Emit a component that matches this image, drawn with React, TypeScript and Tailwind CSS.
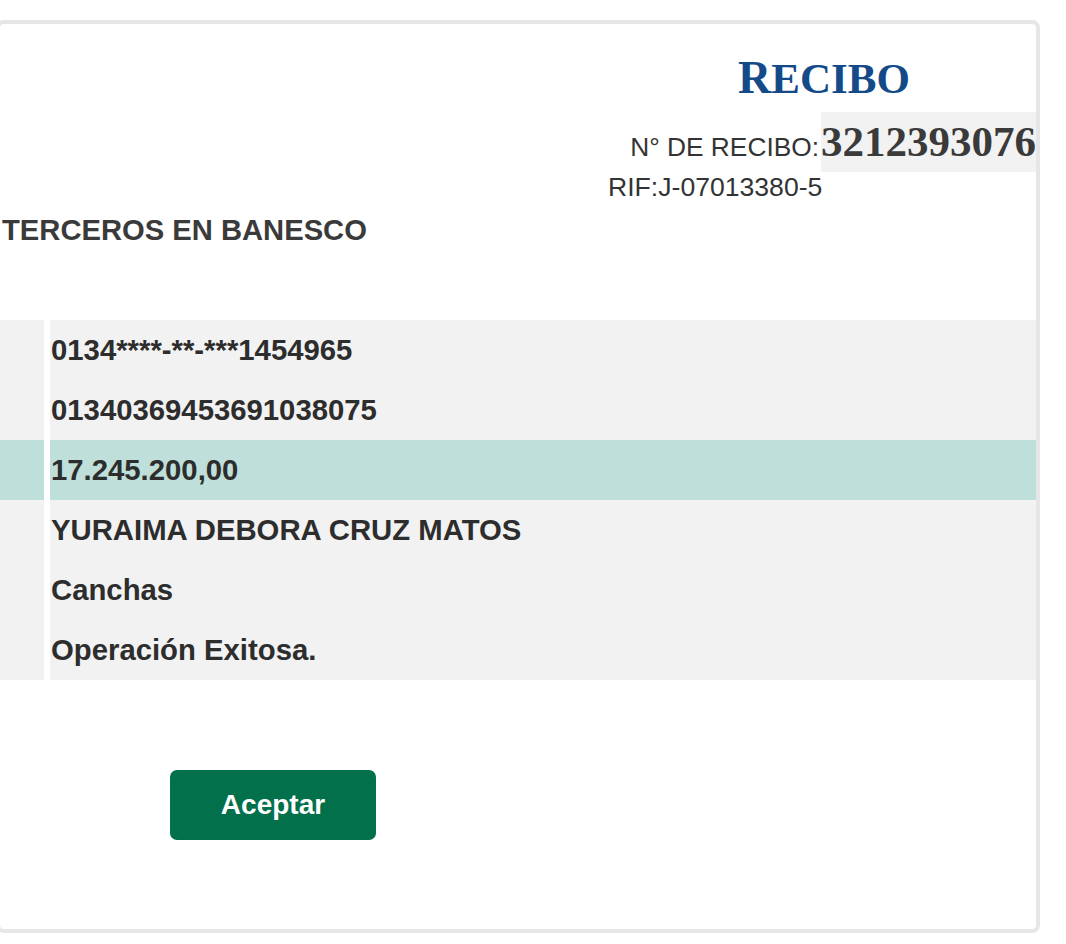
import React from 'react';

const rows = [
  { value: '0134****-**-***1454965' },
  { value: '01340369453691038075' },
  { value: '17.245.200,00', highlight: true },
  { value: 'YURAIMA DEBORA CRUZ MATOS' },
  { value: 'Canchas' },
  { value: 'Operación Exitosa.' },
];

export default function App() {
  return (
    <div className="min-h-screen bg-white pt-[20px] font-['Liberation_Sans',Arial,sans-serif] overflow-hidden">
      <div className="ml-[-4px] w-[1044px] h-[913px] border-4 border-[#e6e6e6] rounded-[8px] bg-white flex flex-col">
        {/* encabezado */}
        <div className="flex justify-end pt-[30px]">
          <div className="w-[428px] flex flex-col">
            <div className="pl-[130px] h-[48px] leading-[48px] font-['Liberation_Serif','Times_New_Roman',serif] font-bold text-[#154a89]">
              <span className="text-[46px]">R</span>
              <span className="text-[43px]">ECIBO</span>
            </div>
            <div className="mt-[10px] flex justify-end items-baseline">
              <span className="text-[26.3px] text-[#333]">N° DE RECIBO:</span>
              <span className="ml-[2px] h-[60px] leading-[60px] bg-[#f2f2f2] font-['Liberation_Serif','Times_New_Roman',serif] font-bold text-[43px] text-[#3a3a3a]">
                3212393076
              </span>
            </div>
            <div className="h-[30px] leading-[30px] text-[26.6px] text-[#333]">RIF:J-07013380-5</div>
          </div>
        </div>

        <h2 className="mt-[11px] pl-[2px] h-[34px] leading-[34px] text-[29.2px] font-bold text-[#3a3a3a]">
          TERCEROS EN BANESCO
        </h2>

        <div className="mt-[73px] flex flex-col">
          {rows.map((r, i) => (
            <div key={i} className="grid grid-cols-[44px_1fr] gap-x-[6px] h-[60px]">
              <div className={r.highlight ? 'bg-[#bfe0da]' : 'bg-[#f2f2f2]'} />
              <div
                className={`${r.highlight ? 'bg-[#bfe0da]' : 'bg-[#f2f2f2]'} pl-[1px] leading-[60px] text-[29.3px] font-bold text-[#2d2d2d]`}
              >
                {r.value}
              </div>
            </div>
          ))}
        </div>

        <div className="mt-[90px] pl-[170px]">
          <button className="w-[206px] h-[70px] rounded-[7px] bg-[#01704b] text-white text-[28px] font-bold">
            Aceptar
          </button>
        </div>
      </div>
    </div>
  );
}
